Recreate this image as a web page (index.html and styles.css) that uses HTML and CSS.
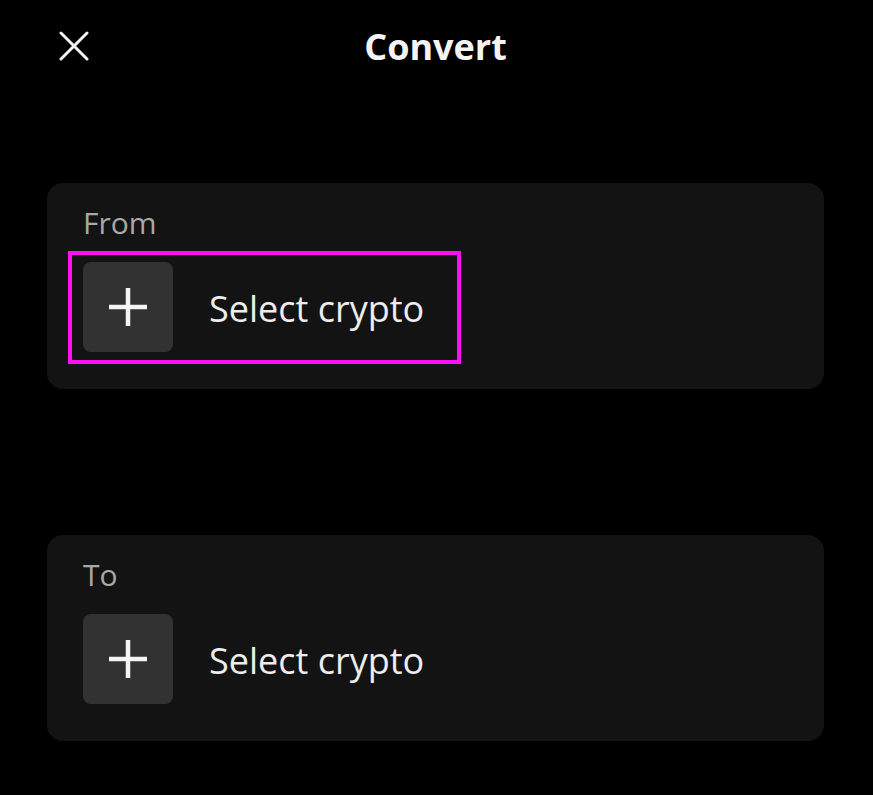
FILE: index.html
```html
<!DOCTYPE html>
<html>
<head>
<meta charset="utf-8">
<link rel="stylesheet" href="styles.css">
</head>
<body>
<div class="screen">
  <header class="topbar">
    <button class="close" aria-label="Close">
      <svg width="30" height="30" viewBox="0 0 30 30"><path d="M2 2 L28 28 M28 2 L2 28" stroke="#f2f2f2" stroke-width="3" stroke-linecap="round" fill="none"/></svg>
    </button>
    <h1 class="title">Convert</h1>
  </header>

  <section class="card card-from">
    <div class="label">From</div>
    <div class="row highlight">
      <div class="tile">
        <svg width="38" height="38" viewBox="0 0 38 38"><path d="M19 0 V38 M0 19 H38" stroke="#f5f5f5" stroke-width="4.5" fill="none"/></svg>
      </div>
      <div class="select">Select crypto</div>
    </div>
  </section>

  <section class="card card-to">
    <div class="label">To</div>
    <div class="row">
      <div class="tile">
        <svg width="38" height="38" viewBox="0 0 38 38"><path d="M19 0 V38 M0 19 H38" stroke="#f5f5f5" stroke-width="4.5" fill="none"/></svg>
      </div>
      <div class="select">Select crypto</div>
    </div>
  </section>
</div>
</body>
</html>
```

FILE: styles.css
```css
html, body {
  margin: 0;
  padding: 0;
  background: #000;
}
body {
  font-family: "Open Sans", "Noto Sans", sans-serif;
  color: #eee;
  width: 873px;
  height: 795px;
  overflow: hidden;
}
.screen {
  display: flex;
  flex-direction: column;
  padding: 0 49px 0 47px;
}
.topbar {
  position: relative;
  height: 98px;
  display: flex;
  align-items: center;
  justify-content: center;
}
.close {
  position: absolute;
  left: 12px;
  top: 31px;
  width: 30px;
  height: 30px;
  padding: 0;
  border: 0;
  background: none;
  display: flex;
}
.title {
  margin: 0;
  font-size: 36px;
  font-weight: 700;
  color: #f4f4f4;
  line-height: 1;
  position: relative;
  top: -2px;
}
.card {
  background: #131313;
  border-radius: 16px;
  padding: 22px 36px 37px;
  display: flex;
  flex-direction: column;
  gap: 21px;
  height: 206px;
  box-sizing: border-box;
}
.card-from { margin-top: 85px; }
.card-to { margin-top: 146px; }
.label {
  font-size: 30px;
  line-height: 36px;
  color: #a8a8a8;
}
.row {
  display: flex;
  align-items: center;
  gap: 36px;
  position: relative;
}
.highlight::after {
  content: "";
  position: absolute;
  left: -15px;
  top: -11px;
  width: 385px;
  height: 105px;
  border: 4px solid #ff10f4;
  pointer-events: none;
}
.tile {
  width: 90px;
  height: 90px;
  background: #323232;
  border-radius: 8px;
  display: flex;
  align-items: center;
  justify-content: center;
}
.select {
  font-size: 36px;
  color: #ededed;
  position: relative;
  top: 1px;
}
```
